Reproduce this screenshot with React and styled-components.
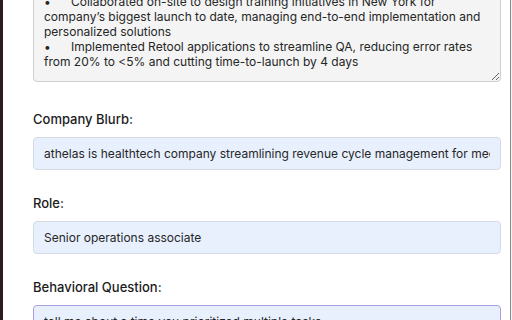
import React from 'react'
import styled, { createGlobalStyle } from 'styled-components'

const GlobalStyle = createGlobalStyle`
  html, body {
    margin: 0;
    padding: 0;
    background: #ffffff;
    overflow: hidden;
  }
  * {
    box-sizing: border-box;
  }
`

const Frame = styled.div`
  display: flex;
  width: 512px;
  height: 320px;
  overflow: hidden;
  font-family: Inter, "Noto Sans", sans-serif;
  color: #1e1e1e;
`

const DarkEdge = styled.div`
  flex: 0 0 3px;
  background: #2a1c22;
`

const Main = styled.main`
  flex: 1;
  background: #ffffff;
  border-right: 1px solid #8c8c8c;
  padding: 0 9px 0 30px;
  overflow: hidden;
`

const Outside = styled.div`
  flex: 0 0 1px;
  background: #f2f2f2;
`

const Form = styled.form`
  margin-top: -17px;
`

const Group = styled.div`
  margin-bottom: ${p => (p.$tall ? '29px' : '25px')};
`

const Label = styled.label`
  display: block;
  font-size: 13px;
  font-weight: 500;
  line-height: 16px;
  color: #1c1c1c;
  margin-bottom: 10px;
`

const TextArea = styled.textarea`
  display: block;
  width: 468px;
  height: 99px;
  padding: 10px;
  font-family: Inter, "Noto Sans", sans-serif;
  font-size: 12px;
  line-height: normal;
  color: #262626;
  background: #f4f4f4;
  border: 1px solid #cfcfcf;
  border-radius: 4px;
  resize: vertical;
  tab-size: 8;
  outline: none;
`

const Input = styled.input`
  display: block;
  width: 468px;
  height: 33px;
  padding: 0 10px;
  font-family: Inter, "Noto Sans", sans-serif;
  font-size: 12px;
  color: #262626;
  background: #e8f0fe;
  border: 1px solid ${p => (p.$active ? '#a89fdc' : '#d5dbe5')};
  border-radius: 4px;
  outline: none;
`

const experience = `•\tCollaborated on-site to design training initiatives in New York for company’s biggest launch to date, managing end-to-end implementation and personalized solutions
•\tImplemented Retool applications to streamline QA, reducing error rates from 20% to <5% and cutting time-to-launch by 4 days`

const fields = [
  { id: 'blurb', label: 'Company Blurb:', value: 'athelas is healthtech company streamlining revenue cycle management for medical practices' },
  { id: 'role', label: 'Role:', value: 'Senior operations associate' },
  { id: 'question', label: 'Behavioral Question:', value: 'tell me about a time you prioritized multiple tasks', active: true },
]

const App = () => {
  return (
    <Frame>
      <GlobalStyle />
      <DarkEdge />
      <Main>
        <Form onSubmit={e => e.preventDefault()}>
          <Group $tall>
            <TextArea readOnly value={experience} />
          </Group>
          {fields.map(f => (
            <Group key={f.id}>
              <Label htmlFor={f.id}>{f.label}</Label>
              <Input id={f.id} readOnly value={f.value} $active={f.active} />
            </Group>
          ))}
        </Form>
      </Main>
      <Outside />
    </Frame>
  )
}

export default App
